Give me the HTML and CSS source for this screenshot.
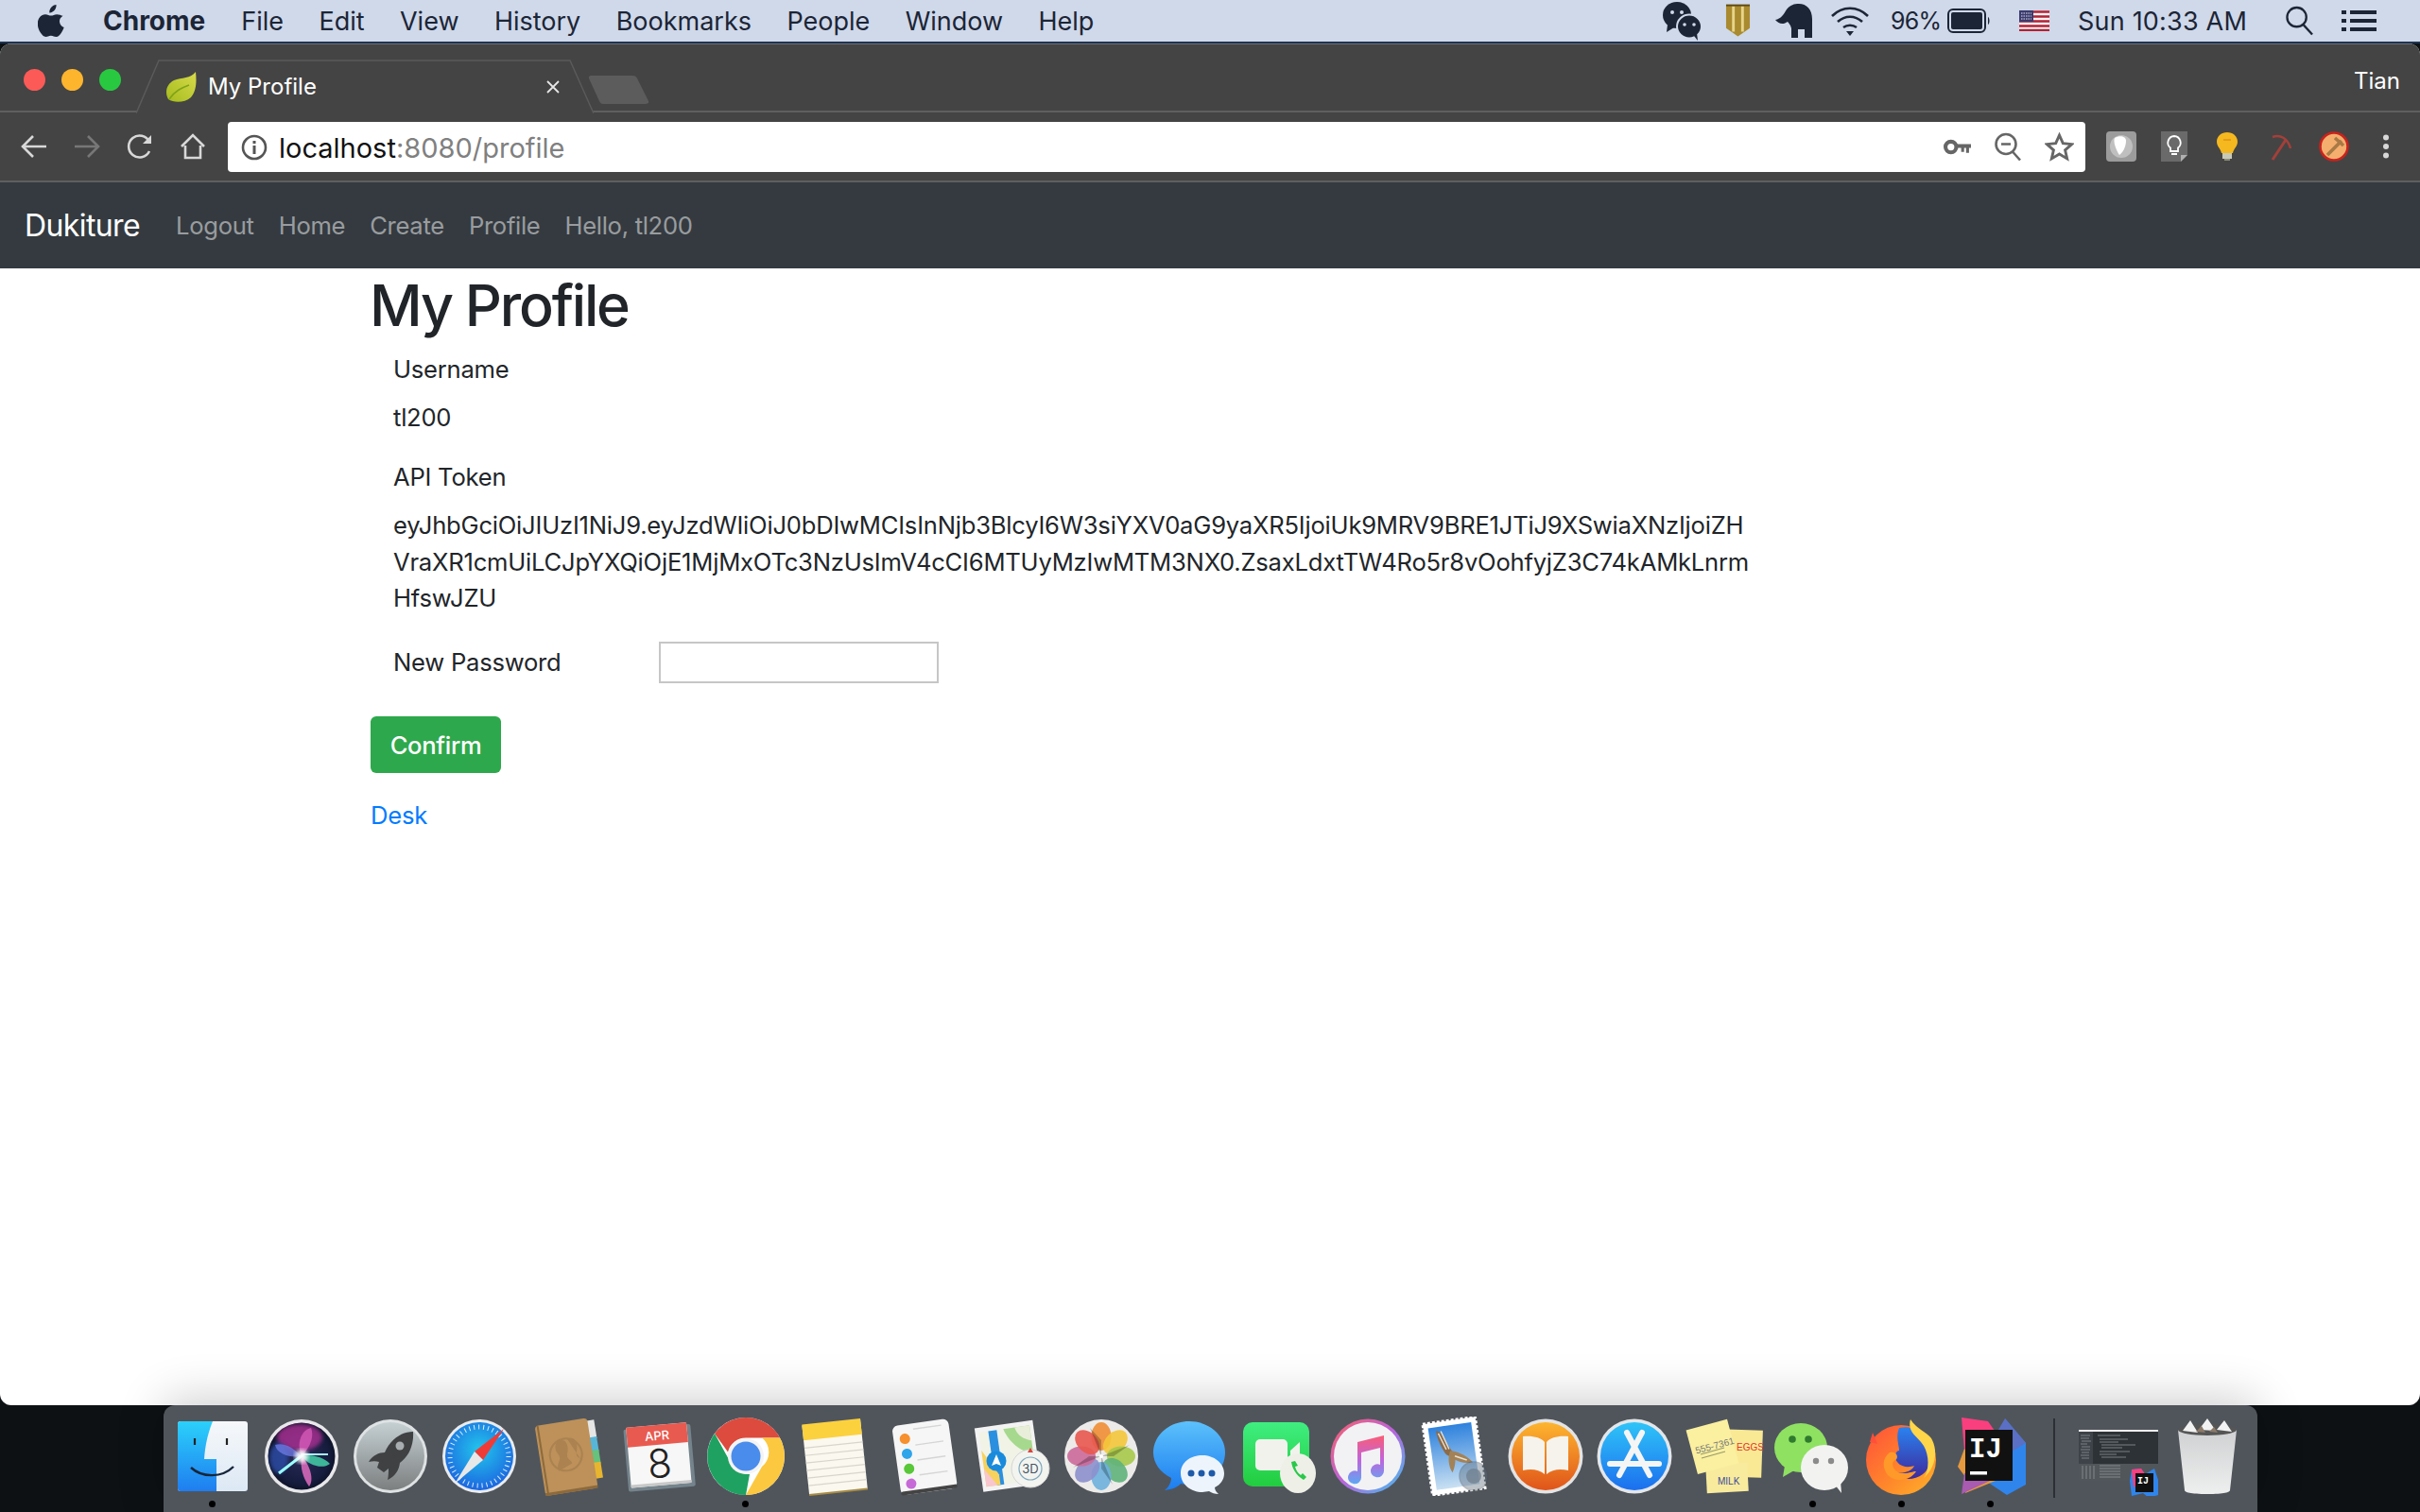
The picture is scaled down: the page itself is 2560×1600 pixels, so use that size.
FILE: index.html
```html
<!DOCTYPE html>
<html lang="en">
<head>
<meta charset="utf-8">
<title>My Profile</title>
<link rel="stylesheet" href="styles.css">
</head>
<body>
<header class="menubar">
  <nav class="menu-left">
    <svg class="apple" viewBox="0 0 28 34"><path fill="#1c2536" d="M19.500 0c.2 2.300-.6 4.300-1.800 5.800-1.300 1.600-3.300 2.800-5.400 2.600-.3-2.200.8-4.400 1.900-5.700C15.500 1.200 17.600.1 19.500 0zM26.600 11.800c-2.400 1.500-3.700 3.400-3.600 6 .1 3 1.800 5.100 4.700 6.300-.7 2.100-1.700 4.100-3 5.900-1.500 2.100-3 4-5.300 4-2.200 0-2.900-1.300-5.500-1.300s-3.400 1.300-5.400 1.300C6.200 34 4.500 32 3 29.800-.7 24.300-1 17.800 1.300 14.200c1.600-2.500 4.200-4 6.700-4 2.500 0 4.100 1.400 6.100 1.400 2 0 3.200-1.400 6.100-1.400 2.200 0 4.500 1.100 6.400 1.600z"/></svg>
    <span class="menu-item menu-app">Chrome</span>
    <span class="menu-item">File</span>
    <span class="menu-item">Edit</span>
    <span class="menu-item">View</span>
    <span class="menu-item">History</span>
    <span class="menu-item">Bookmarks</span>
    <span class="menu-item">People</span>
    <span class="menu-item">Window</span>
    <span class="menu-item">Help</span>
  </nav>
  <div class="menu-right">
    <svg class="st-wechat" viewBox="0 0 42 42"><ellipse cx="16" cy="15" rx="15" ry="14" fill="#1c2536"/><path d="M6 25l-1 8 8-5z" fill="#1c2536"/><ellipse cx="29" cy="27" rx="13" ry="12.500" fill="#1c2536" stroke="#cfd9ea" stroke-width="2"/><path d="M34 37l4 5-1-8z" fill="#1c2536"/><circle cx="11" cy="12" r="2" fill="#cfd9ea"/><circle cx="21" cy="12" r="2" fill="#cfd9ea"/><circle cx="24" cy="25" r="1.800" fill="#cfd9ea"/><circle cx="34" cy="25" r="1.800" fill="#cfd9ea"/></svg>
    <svg class="st-shield" viewBox="0 0 28 36"><path d="M1 1h26v25L14 35 1 26z" fill="#a98a2e"/><path d="M9 2v28M19 2v28" stroke="#e8d48a" stroke-width="3"/><path d="M1 1h26" stroke="#5e4a12" stroke-width="2"/></svg>
    <svg class="st-elephant" viewBox="0 0 40 36"><path d="M0 17C6 16 9 11 12 6 16 1 20 0 25 0c8 0 14 6 14 16v20h-8v-9h-7v9h-7V26c-1-4-3-6-4-7-4 3-9 3-13-2z" fill="#1c2536"/></svg>
    <svg class="st-wifi" viewBox="0 0 42 34" fill="none" stroke="#1c2536" stroke-width="2.600"><path d="M2 12c11-11 27-11 38 0"/><path d="M8 18c8-7 18-7 26 0"/><path d="M14 24c4-3 10-3 14 0"/><path d="M17 28h8l-4 5z" fill="#1c2536" stroke="none"/></svg>
    <span class="st-text st-batt-text">96%</span>
    <svg class="st-batt" viewBox="0 0 46 26"><rect x="1" y="1" width="39" height="24" rx="5" fill="none" stroke="#1c2536" stroke-width="2"/><rect x="4" y="4" width="33" height="18" rx="2" fill="#1c2536"/><path d="M43 9c2 1 2 7 0 8z" fill="#1c2536"/></svg>
    <svg class="st-flag" viewBox="0 0 32 22"><rect width="32" height="22" fill="#f4f4f4"/><path d="M0 1.500h32M0 6.500h32M0 11.500h32M0 16.500h32M0 21h32" stroke="#b32236" stroke-width="2.500"/><rect width="15" height="12" fill="#3c3b6e"/><path d="M2 3h11M2 6h11M2 9h11" stroke="#dfe3f0" stroke-width="1.200" stroke-dasharray="1.500 1"/></svg>
    <span class="st-text st-time">Sun 10:33 AM</span>
    <svg class="st-search" viewBox="0 0 30 32" fill="none" stroke="#1c2536" stroke-width="2.400"><circle cx="12" cy="12" r="10.500"/><path d="M19 20l10 11"/></svg>
    <svg class="st-list" viewBox="0 0 37 22" fill="#1c2536"><rect width="5" height="4"/><rect x="9" width="28" height="4"/><rect y="9" width="5" height="4"/><rect x="9" y="9" width="28" height="4"/><rect y="18" width="5" height="4"/><rect x="9" y="18" width="28" height="4"/></svg>
  </div>
</header>
<div class="menu-edge"></div>

<main class="window">
  <div class="tabstrip">
    <div class="lights"><i class="light red"></i><i class="light yellow"></i><i class="light green"></i></div>
    <div class="tabs">
      <div class="tab">
        <svg class="tab-shape" viewBox="0 0 484 57" preserveAspectRatio="none"><path d="M0 57L24 1H459L484 57" fill="#444" stroke="#5a5a5a" stroke-width="1.500"/></svg>
        <svg class="favicon" viewBox="0 0 32 32"><defs><linearGradient id="leaf" x1="0" y1="1" x2="1" y2="0"><stop offset="0" stop-color="#a4bb1c"/><stop offset="1" stop-color="#d8db4c"/></linearGradient></defs><path d="M31 0c1 10 1 20-5 27-7 6-18 6-24 2C-2 22 0 13 8 9c8-3 18-2 23-9z" fill="url(#leaf)"/><path d="M3 29c6-9 13-12 21-15" stroke="#7fa318" stroke-width="1.500" fill="none"/></svg>
        <span class="tab-title">My Profile</span>
        <svg class="tab-close" viewBox="0 0 14 14"><path d="M1 1l12 12M13 1L1 13" stroke="#e6e6e6" stroke-width="1.800"/></svg>
      </div>
      <svg class="newtab" viewBox="0 0 63 30"><path d="M3 0H46C49 0 50 1 51 3L63 27C64 29 62 30 60 30H15C13 30 12 29 11 27L0 3C-1 1 1 0 3 0z" fill="#5c5c5c"/></svg>
    </div>
    <span class="profile-name">Tian</span>
  </div>
  <div class="toolbar">
    <div class="nav-buttons">
      <svg class="tb-btn" viewBox="0 0 28 28" fill="none" stroke="#d8d8d8" stroke-width="2.600"><path d="M27 14H3M13 3L2 14l11 11"/></svg>
      <svg class="tb-btn" viewBox="0 0 28 28" fill="none" stroke="#777" stroke-width="2.600"><path d="M1 14h24M15 3l11 11-11 11"/></svg>
      <svg class="tb-btn" viewBox="0 0 28 28" fill="none" stroke="#d8d8d8" stroke-width="2.600"><path d="M24 19a11.500 11.500 0 1 1 0-10"/><path d="M26 2v9h-9z" fill="#d8d8d8" stroke="none"/></svg>
      <svg class="tb-btn" viewBox="0 0 28 28" fill="none" stroke="#d8d8d8" stroke-width="2.600"><path d="M2 14L14 2l12 12M6 13v13h16V13"/></svg>
    </div>
    <div class="omnibox">
      <svg class="info" viewBox="0 0 28 28"><circle cx="14" cy="14" r="12" fill="none" stroke="#555" stroke-width="2.600"/><rect x="12.500" y="12" width="3" height="9" fill="#555"/><rect x="12.500" y="7" width="3" height="3" fill="#555"/></svg>
      <span class="url"><b class="host">localhost</b>:8080/profile</span>
      <span class="omni-spacer"></span>
      <svg class="omni-key" viewBox="0 0 28 16"><circle cx="7.500" cy="8" r="5.500" fill="none" stroke="#666" stroke-width="4"/><path d="M13 5h15v4h-2v5h-3V9h-2v4h-3V9h-5z" fill="#666"/></svg>
      <svg class="omni-zoom" viewBox="0 0 28 30" fill="none" stroke="#666" stroke-width="2.600"><circle cx="12" cy="12" r="10.500"/><path d="M7 12h10M19 20l8 9"/></svg>
      <svg class="omni-star" viewBox="0 0 30 30" fill="none" stroke="#666" stroke-width="2.800"><path d="M15 3l3.700 8.300 9 .9-6.800 6 2 8.800L15 22.300 7.100 27l2-8.800-6.800-6 9-.9z"/></svg>
    </div>
    <div class="extensions">
      <svg class="ext ext-a" viewBox="0 0 32 32"><rect width="32" height="32" rx="4" fill="#9c9c9c"/><circle cx="16" cy="16" r="12" fill="#bfbfbf"/><path d="M9 7c5-3 12-2 12 3 0 7-4 13-7 15-3-4-7-14-5-18z" fill="#fff"/></svg>
      <svg class="ext ext-b" viewBox="0 0 30 32"><path d="M1 0h28v25l-7 7H1z" fill="#6a6a6a"/><path d="M22 32v-7h7z" fill="#b0b0b0"/><path d="M15 5a7 7 0 0 0-4 12.500V21h8v-3.500A7 7 0 0 0 15 5zM12 24h6" fill="none" stroke="#fff" stroke-width="1.800"/></svg>
      <svg class="ext ext-c" viewBox="0 0 22 30"><path d="M11 0c6 0 11 4 11 10 0 5-4 7-5 12H5C4 17 0 15 0 10 0 4 5 0 11 0z" fill="#f5b81f"/><path d="M7 8h8" stroke="#d77f12" stroke-width="1.200"/><rect x="6" y="22" width="10" height="6" fill="#c9c9b8"/><rect x="8" y="28" width="6" height="2" fill="#8c8c7a"/></svg>
      <svg class="ext ext-d" viewBox="0 0 24 30" fill="none" stroke="#a3403a" stroke-width="3"><path d="M18 8L4 29"/><path d="M4 5c8-3 16 1 19 12" stroke-width="2.600"/></svg>
      <svg class="ext ext-e" viewBox="0 0 32 32"><circle cx="16" cy="16" r="14.500" fill="#f5ae6e" stroke="#c8231d" stroke-width="2.600"/><path d="M24 10L9 25M17 7l9 8" fill="none" stroke="#a87945" stroke-width="3.600"/></svg>
      <svg class="ext ext-f" viewBox="0 0 8 26" fill="#d8d8d8"><circle cx="4" cy="3.500" r="3"/><circle cx="4" cy="13" r="3"/><circle cx="4" cy="22.500" r="3"/></svg>
    </div>
  </div>
  <div class="site-nav">
    <a class="brand">Dukiture</a>
    <a class="nav-link">Logout</a>
    <a class="nav-link">Home</a>
    <a class="nav-link">Create</a>
    <a class="nav-link">Profile</a>
    <a class="nav-link">Hello, tl200</a>
  </div>
  <section class="content">
    <h1 class="title">My Profile</h1>
    <div class="field">Username</div>
    <div class="field value">tl200</div>
    <div class="field">API Token</div>
    <div class="field value token">eyJhbGciOiJIUzI1NiJ9.eyJzdWIiOiJ0bDIwMCIsInNjb3BlcyI6W3siYXV0aG9yaXR5IjoiUk9MRV9BRE1JTiJ9XSwiaXNzIjoiZH<br>VraXR1cmUiLCJpYXQiOjE1MjMxOTc3NzUsImV4cCI6MTUyMzIwMTM3NX0.ZsaxLdxtTW4Ro5r8vOohfyjZ3C74kAMkLnrm<br>HfswJZU</div>
    <div class="pw-row">
      <label class="pw-label" for="pw">New Password</label>
      <input class="pw-input" id="pw" type="password">
    </div>
    <button class="confirm" type="button">Confirm</button>
    <a class="desk">Desk</a>
  </section>
</main>

<footer class="dock">
  <div class="dock-item"><svg class="dock-icon" viewBox="0 0 84 84"><defs><linearGradient id="fl" x1="0" y1="0" x2="0" y2="1"><stop offset="0" stop-color="#2bd1fb"/><stop offset="1" stop-color="#1f7df0"/></linearGradient><linearGradient id="fr" x1="0" y1="0" x2="0" y2="1"><stop offset="0" stop-color="#f6f8fa"/><stop offset="1" stop-color="#dce8f5"/></linearGradient></defs><rect x="5" y="5" width="74" height="74" rx="3" fill="url(#fr)"/><path d="M8 5h34C36 20 34 32 33 45h13v34H8a3 3 0 0 1-3-3V8a3 3 0 0 1 3-3z" fill="url(#fl)"/><path d="M23 23v7M57 23v7" stroke="#222" stroke-width="2.200"/><path d="M19 54c12 11 33 11 45-1" fill="none" stroke="#17263a" stroke-width="2.400"/></svg><i class="run-dot"></i></div>

  <div class="dock-item"><svg class="dock-icon" viewBox="0 0 84 84"><defs><radialGradient id="sr" cx=".5" cy=".5" r=".55"><stop offset="0" stop-color="#2a2a5a"/><stop offset=".75" stop-color="#151c3c"/><stop offset="1" stop-color="#0b1020"/></radialGradient><filter id="sb"><feGaussianBlur stdDeviation="2"/></filter><clipPath id="sc"><circle cx="42" cy="42" r="35.500"/></clipPath></defs><circle cx="42" cy="42" r="39" fill="#e8e8ea"/><circle cx="42" cy="42" r="35.500" fill="url(#sr)"/><g clip-path="url(#sc)"><ellipse cx="40" cy="22" rx="24" ry="14" fill="#b8339a" opacity=".75" filter="url(#sb)"/><ellipse cx="18" cy="44" rx="10" ry="16" fill="#3354b8" opacity=".7" filter="url(#sb)"/><path d="M42 42C36 28 42 14 52 12c4 10-2 22-10 30z" fill="#d45ab8" opacity=".8"/><path d="M42 42C30 30 22 28 14 30c2 10 16 14 28 12z" fill="#6a78e0" opacity=".8"/><path d="M42 42c10-2 22 0 30 8-8 6-22 2-30-8z" fill="#44d0a8" opacity=".85"/><path d="M42 42c-2 12 2 24 8 32 6-8 0-24-8-32z" fill="#e06cc0" opacity=".85"/><path d="M44 40L18 60" stroke="#9ff" stroke-width="3"/><path d="M42 40h28" stroke="#aef" stroke-width="1.800"/></g><circle cx="42" cy="42" r="7" fill="#fff" opacity=".9" filter="url(#sb)"/></svg></div>

  <div class="dock-item"><svg class="dock-icon" viewBox="0 0 84 84"><defs><linearGradient id="lp" x1="0" y1="0" x2="0" y2="1"><stop offset="0" stop-color="#c5d0d3"/><stop offset="1" stop-color="#7c7f80"/></linearGradient></defs><circle cx="42" cy="42" r="39" fill="#dfe2e3"/><circle cx="42" cy="42" r="36" fill="url(#lp)"/><path d="M66 16c-12 0-24 8-30 22-6 0-13 3-17 10 4-1 8-1 11 0l-2 6 7 5 5-4c0 4 0 8-1 12 8-4 12-10 13-18 10-7 15-20 14-33z" fill="#3f4142"/><circle cx="52" cy="31" r="4.500" fill="#a8adaf"/></svg></div>

  <div class="dock-item"><svg class="dock-icon" viewBox="0 0 84 84"><defs><radialGradient id="sf" cx=".5" cy=".4" r=".6"><stop offset="0" stop-color="#22c6ec"/><stop offset="1" stop-color="#1c66e0"/></radialGradient></defs><circle cx="42" cy="42" r="39" fill="#e9ecef"/><circle cx="42" cy="42" r="36" fill="url(#sf)"/><circle cx="42" cy="42" r="31" fill="none" stroke="#fff" stroke-width="5" stroke-dasharray="1 4" opacity=".85"/><path d="M68 13L37 37l9 9z" fill="#ef3b36"/><path d="M16 71l21-34 9 9z" fill="#e8e8e8"/></svg></div>

  <div class="dock-item"><svg class="dock-icon" viewBox="0 0 84 84"><g transform="rotate(-9 42 42)"><rect x="66" y="8" width="9" height="20" fill="#e6e6e6"/><rect x="66" y="26" width="9" height="16" fill="#57b6d8"/><rect x="66" y="40" width="9" height="15" fill="#66c27c"/><rect x="66" y="53" width="9" height="17" fill="#e8b52f"/><rect x="12" y="5" width="56" height="75" rx="4" fill="#bd9159"/><rect x="14" y="5" width="2" height="75" fill="#8d6a3c"/><rect x="12" y="77" width="56" height="3" fill="#8d6a3c"/><circle cx="40" cy="40" r="17" fill="none" stroke="#ab8250" stroke-width="2"/><path d="M30 56c-2-8 3-10 3-14s-3-5-3-10 3-8 7-8 6 3 6 8-2 7-2 10 4 5 4 8zM44 24c6-2 9 2 9 7s-2 8-2 11 4 4 5 8" fill="#ab8250"/></g></svg></div>

  <div class="dock-item"><svg class="dock-icon" viewBox="0 0 84 84"><g transform="rotate(-5 42 42)"><rect x="9" y="11" width="71" height="66" rx="2" fill="#75848c"/><rect x="12" y="9" width="64" height="64" rx="1" fill="#f7f7f7"/><path d="M12 9h64v21H12z" fill="#e85a50"/><rect x="12" y="70" width="64" height="3" fill="#c8c8c8"/><text class="cal-month" x="44" y="25">APR</text><text class="cal-day" x="44" y="65">8</text></g></svg></div>

  <div class="dock-item"><svg class="dock-icon" viewBox="0 0 84 84"><circle cx="42" cy="42" r="41" fill="#fff"/><path d="M42 1a41 41 0 0 1 36 21.500H42a19.500 19.500 0 0 0-19 15L9 18A41 41 0 0 1 42 1z" fill="#dc4b3e"/><path d="M78 22.500A41 41 0 0 1 42 83l17-30a19.500 19.500 0 0 0 0-30.500z" fill="#fcc83f"/><path d="M9 18l17 31a19.500 19.500 0 0 0 20 12L42 83A41 41 0 0 1 9 18z" fill="#1fa261"/><circle cx="42" cy="42" r="19" fill="#f4f4f4"/><circle cx="42" cy="42" r="15.500" fill="#4a8cec"/></svg><i class="run-dot"></i></div>

  <div class="dock-item"><svg class="dock-icon" viewBox="0 0 84 84"><g transform="rotate(-6 42 42)"><rect x="11" y="6" width="62" height="74" fill="#faf8ef"/><rect x="11" y="5" width="62" height="17" fill="#fbd13e"/><path d="M11 30h62M11 38h62M11 46h62M11 54h62M11 62h62M11 70h62" stroke="#d8d6cc" stroke-width="1.200"/><rect x="11" y="79" width="62" height="2" fill="#a78c46"/></g></svg></div>

  <div class="dock-item"><svg class="dock-icon" viewBox="0 0 84 84"><g transform="rotate(-8 42 42)"><rect x="13" y="6" width="60" height="74" rx="6" fill="#f6f6f6"/><rect x="13" y="76" width="60" height="4" rx="2" fill="#444"/><circle cx="25" cy="21" r="5.500" fill="#f7902e"/><circle cx="25" cy="37" r="5.500" fill="#2fa5ea"/><circle cx="25" cy="53" r="5.500" fill="#58c738"/><circle cx="25" cy="69" r="5.500" fill="#c66ad8"/><path d="M35 12h30M35 29h30M35 45h30M35 61h30" stroke="#d5d5d5" stroke-width="1.400"/></g></svg></div>

  <div class="dock-item"><svg class="dock-icon" viewBox="0 0 84 84"><g transform="rotate(-8 36 40)"><rect x="6" y="8" width="62" height="68" fill="#f3f3f3"/><rect x="10" y="13" width="54" height="58" fill="#f0f3e6"/><path d="M36 13h28v30C52 40 40 28 36 13z" fill="#a6d98e"/><path d="M48 13h16v16C56 27 50 22 48 13z" fill="#e9eedb"/><rect x="20" y="13" width="9" height="58" fill="#2b8fe0"/><path d="M10 32l15 28v11H10z" fill="#f7d25e"/><path d="M10 52l12 19H10z" fill="#f7c6cf"/></g><circle cx="25" cy="47" r="10.500" fill="#1a8bdc"/><path d="M25 40l5 12-5-2-5 2z" fill="#fff"/><circle cx="61" cy="55" r="20" fill="#f3f4f0" stroke="#d5d5d5"/><circle cx="61" cy="55" r="12" fill="none" stroke="#7da6bb" stroke-width="1.200"/><text class="maps-3d" x="61" y="60">3D</text><path d="M61 33l3 5h-6z" fill="#d94540"/></svg></div>

  <div class="dock-item"><svg class="dock-icon" viewBox="0 0 84 84"><circle cx="42" cy="42" r="39" fill="#ecebe9"/><g><ellipse cx="42" cy="21" rx="10.500" ry="15" fill="#f08e35" opacity=".9"/><ellipse cx="42" cy="21" rx="10.500" ry="15" fill="#f4c63a" opacity=".9" transform="rotate(45 42 42)"/><ellipse cx="42" cy="21" rx="10.500" ry="15" fill="#a6c94a" opacity=".9" transform="rotate(90 42 42)"/><ellipse cx="42" cy="21" rx="10.500" ry="15" fill="#5fb27a" opacity=".9" transform="rotate(135 42 42)"/><ellipse cx="42" cy="21" rx="10.500" ry="15" fill="#6eb0dd" opacity=".9" transform="rotate(180 42 42)"/><ellipse cx="42" cy="21" rx="10.500" ry="15" fill="#8c90cc" opacity=".9" transform="rotate(225 42 42)"/><ellipse cx="42" cy="21" rx="10.500" ry="15" fill="#cc6a9a" opacity=".9" transform="rotate(270 42 42)"/><ellipse cx="42" cy="21" rx="10.500" ry="15" fill="#e8584e" opacity=".9" transform="rotate(315 42 42)"/></g><path d="M42 42L30 12 42 25zM42 42l30-12-17 12zM42 42l12 30-12-17zM42 42L12 54l17-12z" fill="#000" opacity=".22"/><circle cx="42" cy="42" r="2" fill="#fff"/></svg></div>

  <div class="dock-item"><svg class="dock-icon" viewBox="0 0 84 84"><defs><linearGradient id="mg" x1="0" y1="0" x2="0" y2="1"><stop offset="0" stop-color="#5cc1fb"/><stop offset="1" stop-color="#1c7df0"/></linearGradient></defs><path d="M41 5c21 0 38 15 38 33 0 19-17 34-38 34-3 0-6 0-9-1-4 4-9 6-17 7 4-3 7-8 7-13C10 59 3 49 3 38 3 20 20 5 41 5z" fill="url(#mg)"/><path d="M55 41c12 0 23 8 23 19 0 7-4 12-10 15 0 3 2 5 4 7-4 0-7-1-10-3-2 0-5 1-7 1-12 0-23-8-23-20s11-19 23-19z" fill="#edf4fb"/><circle cx="43" cy="60" r="3.500" fill="#1f5aa8"/><circle cx="54" cy="60" r="3.500" fill="#1f5aa8"/><circle cx="65" cy="60" r="3.500" fill="#1f5aa8"/></svg></div>

  <div class="dock-item"><svg class="dock-icon" viewBox="0 0 84 84"><defs><linearGradient id="ft" x1="0" y1="0" x2="0" y2="1"><stop offset="0" stop-color="#3fee80"/><stop offset="1" stop-color="#22cc3f"/></linearGradient></defs><rect x="4" y="6" width="70" height="68" rx="10" fill="url(#ft)"/><rect x="17" y="24" width="34" height="33" rx="5" fill="#f1f2ec"/><path d="M54 36l10-9v24l-10-8z" fill="#f1f2ec"/><ellipse cx="62" cy="60" rx="19" ry="21" fill="#eef0e8"/><path d="M55 48c1 7 5 14 13 19l3-3-4-4-2 2c-3-2-5-5-6-9l3-1-3-5z" fill="#2ac84a"/></svg></div>

  <div class="dock-item"><svg class="dock-icon" viewBox="0 0 84 84"><defs><linearGradient id="it" x1="0" y1="0" x2="1" y2="1"><stop offset="0" stop-color="#fb5f64"/><stop offset=".5" stop-color="#b964dc"/><stop offset="1" stop-color="#3cc4f0"/></linearGradient><linearGradient id="nt" x1="0" y1="0" x2="0" y2="1"><stop offset="0" stop-color="#fb5c74"/><stop offset=".5" stop-color="#c064dc"/><stop offset="1" stop-color="#5ca8f4"/></linearGradient></defs><circle cx="42" cy="42" r="39.500" fill="url(#it)"/><circle cx="42" cy="42" r="36" fill="#f2f2f5"/><path d="M31 27l28-7v37a7 7 0 1 1-4-6V33l-20 5v26a7 7 0 1 1-4-6z" fill="url(#nt)"/></svg></div>

  <div class="dock-item"><svg class="dock-icon" viewBox="0 0 84 84"><defs><linearGradient id="sky" x1="0" y1="0" x2="0" y2="1"><stop offset="0" stop-color="#2e82dd"/><stop offset="1" stop-color="#c9e0f2"/></linearGradient></defs><g transform="rotate(-8 38 42)"><rect x="11" y="4" width="56" height="76" fill="#fff" stroke="#fff" stroke-width="3" stroke-dasharray="3 2"/><rect x="16" y="9" width="46" height="66" fill="url(#sky)"/><path d="M24 13c4 0 6 6 9 14l7 14c-5 2-9 0-11-6-3-7-5-14-5-22z" fill="#8c6b48"/><path d="M26 16l6 18M29 14l6 20" stroke="#e8e0d0" stroke-width="1.400"/><path d="M36 36c6 1 15 6 22 15-8 1-14-2-18-5-1 5-2 9-5 13-3-7-3-16 1-23z" fill="#a38258"/><path d="M40 42l12 6" stroke="#e8e0d0" stroke-width="1.600"/></g><circle cx="60" cy="63" r="15" fill="#5a6a78" opacity=".4" stroke="#49525a" stroke-width="1.500"/><circle cx="60" cy="63" r="8" fill="#6d7e8c" opacity=".7"/></svg></div>

  <div class="dock-item"><svg class="dock-icon" viewBox="0 0 84 84"><defs><linearGradient id="bk" x1="0" y1="0" x2="0" y2="1"><stop offset="0" stop-color="#fdb52f"/><stop offset="1" stop-color="#e0541a"/></linearGradient></defs><circle cx="42" cy="42" r="39.500" fill="#e4e4e4"/><circle cx="42" cy="42" r="36" fill="url(#bk)"/><path d="M41 27c-4-5-13-7-23-6v36c9-2 17-1 23 4zM43 27c4-5 13-7 23-6v36c-9-2-17-1-23 4z" fill="#f6f3ec"/></svg></div>

  <div class="dock-item"><svg class="dock-icon" viewBox="0 0 84 84"><defs><linearGradient id="as" x1="0" y1="0" x2="0" y2="1"><stop offset="0" stop-color="#2fc4f8"/><stop offset="1" stop-color="#1c6fee"/></linearGradient></defs><circle cx="42" cy="42" r="39.500" fill="#e4e7ea"/><circle cx="42" cy="42" r="36" fill="url(#as)"/><g stroke="#f5f5f5" stroke-width="6" stroke-linecap="round" fill="none"><path d="M50 17L26 62"/><path d="M34 17l24 45"/><path d="M16 50h52"/></g></svg></div>

  <div class="dock-item"><svg class="dock-icon" viewBox="0 0 84 84"><rect x="38" y="14" width="45" height="50" fill="#f9e995" transform="rotate(2 60 40)"/><rect x="24" y="50" width="44" height="30" fill="#f8eb9e" transform="rotate(-3 46 65)"/><rect x="8" y="8" width="45" height="48" fill="#faf0a0" transform="rotate(-15 30 32)"/><path d="M18 40l25-7M19 44l25-7" stroke="#9a9a6a" stroke-width="1.200"/><text class="st-hand" x="12" y="35" transform="rotate(-15 30 32)">555-7361</text><text class="st-hand st-red" x="56" y="36">EGGS</text><text class="st-hand st-blue" x="36" y="72">MILK</text></svg></div>

  <div class="dock-item"><svg class="dock-icon" viewBox="0 0 84 84"><ellipse cx="30" cy="33" rx="28" ry="26" fill="#8fe162"/><path d="M13 52l-2 12 12-7z" fill="#8fe162"/><circle cx="21" cy="24" r="3.800" fill="#2f7a2e"/><circle cx="38" cy="24" r="3.800" fill="#2f7a2e"/><ellipse cx="55" cy="54" rx="25" ry="24" fill="#f2f3f1"/><path d="M66 72l7 9-1-13z" fill="#f2f3f1"/><circle cx="46" cy="47" r="3.200" fill="#8b8b8b"/><circle cx="62" cy="47" r="3.200" fill="#8b8b8b"/></svg><i class="run-dot"></i></div>

  <div class="dock-item"><svg class="dock-icon" viewBox="0 0 84 84"><defs><linearGradient id="ffo" x1="0" y1="0" x2="1" y2="1"><stop offset="0" stop-color="#ff4f3a"/><stop offset=".6" stop-color="#ff8a2a"/><stop offset="1" stop-color="#ffb42a"/></linearGradient><linearGradient id="ffb" x1="0" y1="0" x2="0" y2="1"><stop offset="0" stop-color="#2a82f0"/><stop offset="1" stop-color="#3e2a9c"/></linearGradient></defs><circle cx="42" cy="46" r="37" fill="url(#ffo)"/><path d="M9 27l3-10 5 12z" fill="#ff4f3a"/><path d="M40 12c18-4 36 10 34 32-2 16-14 22-24 22-8 0-14-4-16-8 8 4 20 0 22-6-4 2-14 2-18-4-4-4-2-12 2-12 0-6-4-14 0-24z" fill="url(#ffb)"/><path d="M52 3c-4 14 8 18 14 28 6 10 6 26 0 34 12-10 16-28 8-42-4-6-16-10-22-20z" fill="#ffd54a"/><path d="M30 38c8-2 10 6 6 8-6 2-2 14 8 14 8 0 10-2 14-2-6 10-22 12-30 4-6-8-6-18 2-24z" fill="#ff9a2a"/></svg><i class="run-dot"></i></div>

  <div class="dock-item"><svg class="dock-icon" viewBox="0 0 84 84"><path d="M12 1l28 4 16 23-40 20z" fill="#fa3f7e"/><path d="M58 2l22 26v44L60 83 33 65l30-30z" fill="#2f85ec"/><path d="M58 2l22 26-20 12-16-14z" fill="#5b6fc4"/><path d="M15 34L8 53l11 15-3 13 32-13z" fill="#e6993e"/><path d="M15 60l-3 22 30-14z" fill="#a85bb0"/><rect x="16" y="14" width="50" height="54" fill="#111"/><text class="ij-mark" x="20" y="43">IJ</text><rect x="21" y="58" width="18" height="3.500" fill="#fff"/></svg><i class="run-dot"></i></div>

  <div class="dock-divider"></div>

  <div class="dock-item"><svg class="dock-icon" viewBox="0 0 84 84"><rect y="14" width="84" height="2" fill="#eee"/><rect y="16" width="84" height="50" fill="#2d3236"/><rect y="16" width="15" height="50" fill="#3d4348"/><g stroke="#8d9398" stroke-width=".8"><path d="M2 20h10M2 23h9M3 26h10M2 29h7M3 32h9M2 35h10M3 38h8M2 41h9M3 44h8"/><path d="M20 20h24M22 24h30M22 27h20M24 30h36M24 33h22M22 37h32M22 40h18M24 43h26"/></g><rect y="50" width="84" height="18" fill="#50565a"/><g stroke="#a7abae" stroke-width=".6"><path d="M4 52v14M8 52v14M12 52v14M16 52v14M22 52h22M22 55h22M22 58h22M22 61h22M22 64h22"/></g><path d="M56 56l10-1 4 6 10-6 4 12v16l-10 3-6-5-12 3-2-16z" fill="#2f85ec"/><path d="M56 56l10-1 7 10-15 10z" fill="#fa3f7e"/><rect x="60" y="60" width="19" height="20" fill="#111"/><text class="ij-mark-sm" x="62" y="71">IJ</text></svg></div>

  <div class="dock-item"><svg class="dock-icon" viewBox="0 0 84 84"><defs><linearGradient id="tr" x1="0" y1="0" x2="0" y2="1"><stop offset="0" stop-color="#cfd1d2"/><stop offset="1" stop-color="#eeefef"/></linearGradient></defs><path d="M11 14h62l-7 64c0 2-6 4-24 4s-24-2-24-4z" fill="url(#tr)"/><ellipse cx="42" cy="14" rx="31" ry="6" fill="#555"/><path d="M16 15l8-11 8 13zM33 14l9-12 9 13zM52 14l8-10 8 12z" fill="#f2f2f2"/><path d="M30 16l6-6 4 7zM44 16l5-5 4 6z" fill="#8b7a6a"/></svg></div>
</footer>
</body>
</html>
```
FILE: styles.css
```css
* { box-sizing: border-box; }
html, body { margin: 0; padding: 0; }
body {
  width: 2560px;
  height: 1600px;
  overflow: hidden;
  background: #0d1114;
  display: flex;
  flex-direction: column;
  font-family: Inter, "Liberation Sans", sans-serif;
  color: #212529;
}

/* macOS menu bar */
.menubar {
  height: 44px;
  background: #cfd9ea;
  display: flex;
  justify-content: space-between;
  align-items: center;
  color: #1c2536;
  font-family: Inter, sans-serif;
  font-size: 27px;
  flex: none;
}
.menu-edge { height: 2px; background: #1f3352; flex: none; }
.menu-left { display: flex; align-items: center; padding-left: 40px; }
.apple { width: 28px; height: 34px; margin-right: 41px; }
.menu-item { margin-right: 37.400px; }
.menu-app { font-weight: 700; font-size: 28px; margin-right: 38px; }
.menu-right { display: flex; align-items: center; padding-right: 46px; }
.st-text { white-space: nowrap; }
.st-wechat { width: 42px; height: 42px; margin-right: 25px; }
.st-shield { width: 27px; height: 36px; margin-right: 26px; }
.st-elephant { width: 40px; height: 36px; margin-right: 18px; }
.st-wifi { width: 42px; height: 34px; margin-right: 22px; }
.st-batt-text { width: 52px; margin-right: 8px; font-size: 25px; letter-spacing: -.8px; }
.st-batt { width: 46px; height: 26px; margin-right: 30px; }
.st-flag { width: 32px; height: 22px; margin-right: 30px; }
.st-time { width: 182px; margin-right: 38px; letter-spacing: .2px; }
.st-search { width: 29px; height: 32px; margin-right: 30px; }
.st-list { width: 37px; height: 22px; }

/* browser window */
.window {
  height: 1441px;
  flex: none;
  background: #fff;
  border-radius: 12px;
  display: flex;
  flex-direction: column;
  overflow: hidden;
}
.tabstrip {
  height: 73px;
  background: #444;
  border-top: 1px solid #6f6f6f;
  border-bottom: 2px solid #5f5f5f;
  display: flex;
  align-items: flex-start;
  position: relative;
  flex: none;
}
.lights { display: flex; gap: 17px; padding: 26px 0 0 25px; width: 144px; }
.light { width: 23px; height: 23px; border-radius: 50%; display: block; }
.red { background: #fc5a57; }
.yellow { background: #fdb52e; }
.green { background: #28c941; }
.tabs { display: flex; flex: 1; padding-top: 16px; }
.tab {
  position: relative;
  width: 484px;
  height: 57px;
  margin-bottom: -2px;
  display: flex;
  align-items: center;
  padding: 0 36px 0 32px;
  color: #fff;
  font-size: 24px;
}
.tab-shape { position: absolute; left: 0; top: 0; width: 484px; height: 57px; }
.favicon { position: relative; width: 32px; height: 32px; margin-right: 12px; flex: none; }
.tab-title { position: relative; flex: 1; }
.tab-close { position: relative; width: 14px; height: 14px; }
.newtab { width: 63px; height: 30px; margin: 17px 0 0 -5px; }
.profile-name {
  position: absolute;
  right: 21px;
  top: 24px;
  color: #fff;
  font-size: 24px;
}
.toolbar {
  height: 74px;
  background: #444;
  border-bottom: 2px solid #5f5f5f;
  display: flex;
  align-items: center;
  flex: none;
}
.nav-buttons { display: flex; width: 241px; padding-left: 22px; gap: 28px; }
.tb-btn { width: 28px; height: 28px; }
.omnibox {
  width: 1965px;
  height: 53px;
  margin-top: 1px;
  background: #fff;
  border-radius: 4px;
  display: flex;
  align-items: center;
  padding: 0 12px 0 14px;
  font-size: 29px;
  color: #808080;
}
.info { width: 28px; height: 28px; margin-right: 12px; }
.url { padding-top: 2px; }
.host { font-weight: 400; color: #111; }
.omni-spacer { flex: 1; }
.omni-key { width: 29px; height: 17px; margin-right: 25px; }
.omni-zoom { width: 28px; height: 31px; margin-right: 25px; }
.omni-star { width: 31px; height: 31px; }
.extensions { display: flex; align-items: center; padding-left: 22px; }
.ext-a { width: 32px; height: 32px; margin-right: 25px; }
.ext-b { width: 30px; height: 32px; margin-right: 30px; }
.ext-c { width: 22px; height: 30px; margin-right: 33px; }
.ext-d { width: 24px; height: 30px; margin-right: 29px; }
.ext-e { width: 32px; height: 32px; margin-right: 35px; }
.ext-f { width: 8px; height: 26px; }

/* site navbar */
.site-nav {
  height: 91px;
  background: #343a40;
  display: flex;
  align-items: center;
  padding-left: 26px;
  flex: none;
}
.brand { color: #fff; font-size: 32px; letter-spacing: -.6px; margin-right: 38px; }
.nav-link { color: rgba(255,255,255,.5); font-size: 25.600px; letter-spacing: -.3px; margin-right: 26px; }

/* page content */
.content {
  flex: 1;
  padding-left: 392px;
  font-size: 25.600px;
  line-height: 38.400px;
  letter-spacing: -.24px;
  position: relative;
}
.title {
  margin: 0 0 10px -1px;
  font-size: 61px;
  line-height: 78px;
  font-weight: 500;
  letter-spacing: -2.200px;
}
.field { padding-left: 24px; margin-bottom: 13px; }
.value { margin-bottom: 24px; }
.token { margin-bottom: 27px; white-space: nowrap; letter-spacing: -.22px; }
.pw-row { display: flex; align-items: center; padding-left: 24px; height: 44px; margin-bottom: 35px; }
.pw-label { width: 281px; }
.pw-input { width: 296px; height: 44px; border: 2px solid #c6c6c6; background: #fff; }
.confirm {
  display: block;
  width: 138px;
  height: 60px;
  background-color: #2ea84c;
  color: #fff;
  border: 0;
  border-radius: 6px;
  font: 500 25.600px Inter, sans-serif;
  letter-spacing: -.3px;
  padding: 0;
  margin-bottom: 26px;
}
.desk { color: #007bff; display: block; }

/* dock */
.dock {
  width: 2215px;
  height: 113px;
  align-self: center;
  background: #50555c;
  border-radius: 12px 12px 0 0;
  box-shadow: 0 -6px 50px rgba(0,0,0,.2);
  display: flex;
  align-items: flex-start;
  padding: 12px 6px 0 5px;
  position: relative;
  flex: none;
}
.dock-item {
  width: 94.050px;
  height: 101px;
  display: flex;
  flex-direction: column;
  align-items: center;
  flex: none;
}
.dock-icon { width: 84px; height: 84px; }
.run-dot { display: block; width: 7px; height: 7px; border-radius: 50%; background: #000; margin-top: 5px; }
.dock-divider { width: 41px; height: 84px; margin-top: 2px; position: relative; flex: none; background: linear-gradient(#2c2f33,#2c2f33) center / 2px 100% no-repeat; }
.cal-month { font: 500 13px Inter, sans-serif; fill: #fff; text-anchor: middle; }
.cal-day { font: 300 42px Inter, sans-serif; fill: #222; text-anchor: middle; }
.maps-3d { font: 400 13px Inter, sans-serif; fill: #456; text-anchor: middle; }
.st-hand { font: 400 10px "Liberation Sans", sans-serif; fill: #777; }
.st-red { fill: #e4342a; }
.st-blue { fill: #3a4a9a; }
.ij-mark { font: 700 29px "Liberation Mono", monospace; fill: #fff; }
.ij-mark-sm { font: 700 10px "Liberation Mono", monospace; fill: #fff; }
```
